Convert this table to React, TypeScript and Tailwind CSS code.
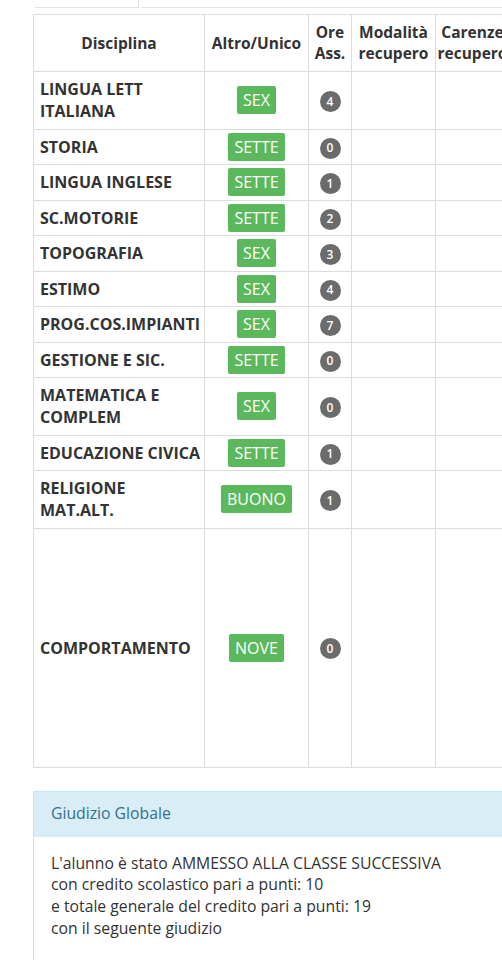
type Row = { name: string[]; voto: string; ore: number; tall?: boolean };

const ROWS: Row[] = [
  { name: ['LINGUA LETT', 'ITALIANA'], voto: 'SEX', ore: 4 },
  { name: ['STORIA'], voto: 'SETTE', ore: 0 },
  { name: ['LINGUA INGLESE'], voto: 'SETTE', ore: 1 },
  { name: ['SC.MOTORIE'], voto: 'SETTE', ore: 2 },
  { name: ['TOPOGRAFIA'], voto: 'SEX', ore: 3 },
  { name: ['ESTIMO'], voto: 'SEX', ore: 4 },
  { name: ['PROG.COS.IMPIANTI'], voto: 'SEX', ore: 7 },
  { name: ['GESTIONE E SIC.'], voto: 'SETTE', ore: 0 },
  { name: ['MATEMATICA E', 'COMPLEM'], voto: 'SEX', ore: 0 },
  { name: ['EDUCAZIONE CIVICA'], voto: 'SETTE', ore: 1 },
  { name: ['RELIGIONE', 'MAT.ALT.'], voto: 'BUONO', ore: 1 },
  { name: ['COMPORTAMENTO'], voto: 'NOVE', ore: 0, tall: true },
];

const cell = 'border border-[#dddddd] align-middle';

const Voto = ({ text }: { text: string }) => (
  <span className="inline-block rounded-[2px] bg-[#5cb85c] px-[6px] py-[3px] text-[16px] leading-[22px] text-white">
    {text}
  </span>
);

const Ore = ({ n }: { n: number }) => (
  <span className="inline-flex h-[21px] w-[21px] items-center justify-center rounded-full bg-[#6b6b6b] text-[12px] font-semibold leading-none text-white">
    {n}
  </span>
);

export default function App() {
  return (
    <div
      className="h-[960px] w-[502px] overflow-hidden bg-white text-[#333333]"
      style={{ fontFamily: '"Open Sans", "Noto Sans", sans-serif' }}
    >
      {/* schede sopra la tabella */}
      <div className="flex h-[8px] pl-[35px]">
        <div className="w-[104px] border-b border-r border-[#e3e3e3]" />
        <div className="ml-[2px] flex-1 border-b border-[#e3e3e3]" />
      </div>

      {/* tabella voti */}
      <div className="mt-[6px] pl-[33px]">
        <table className="w-[700px] table-fixed border-collapse text-[16px] leading-[22px]">
          <colgroup>
            <col className="w-[171px]" />
            <col className="w-[104px]" />
            <col className="w-[43px]" />
            <col className="w-[84px]" />
            <col className="w-[74px]" />
            <col className="w-[224px]" />
          </colgroup>
          <thead>
            <tr className="h-[57px] text-center text-[15.5px] font-bold leading-[21px]">
              <th className={`${cell} px-[4px]`}>Disciplina</th>
              <th className={`${cell} px-[2px]`}>Altro/Unico</th>
              <th className={`${cell} px-0`}>
                Ore
                <br />
                Ass.
              </th>
              <th className={`${cell} px-0`}>
                Modalità
                <br />
                recupero
              </th>
              <th className={`${cell} px-0 whitespace-nowrap`}>
                Carenze
                <br />
                recupero
              </th>
              <th className={cell} />
            </tr>
          </thead>
          <tbody>
            {ROWS.map((r) => (
              <tr key={r.name.join(' ')} className={r.tall ? 'h-[239px]' : ''}>
                <td className={`${cell} py-[6.25px] pl-[6px] pr-[2px] font-bold`}>
                  {r.name.map((l, i) => (
                    <div key={i}>{l}</div>
                  ))}
                </td>
                <td className={`${cell} text-center`}>
                  <Voto text={r.voto} />
                </td>
                <td className={`${cell} text-center`}>
                  <Ore n={r.ore} />
                </td>
                <td className={cell} />
                <td className={cell} />
                <td className={cell} />
              </tr>
            ))}
          </tbody>
        </table>
      </div>

      {/* giudizio globale */}
      <div className="ml-[33px] mt-[23px] w-[520px] border border-[#bce8f1]">
        <div className="flex h-[45px] items-center bg-[#d9edf7] px-[17px] text-[15.75px] text-[#31708f]">
          Giudizio Globale
        </div>
        <div className="px-[17px] pt-[16px] pb-[40px] text-[15.75px] leading-[21.7px] text-[#333333]">
          <div>L'alunno è stato AMMESSO ALLA CLASSE SUCCESSIVA</div>
          <div>con credito scolastico pari a punti: 10</div>
          <div>e totale generale del credito pari a punti: 19</div>
          <div>con il seguente giudizio</div>
        </div>
      </div>
    </div>
  );
}
